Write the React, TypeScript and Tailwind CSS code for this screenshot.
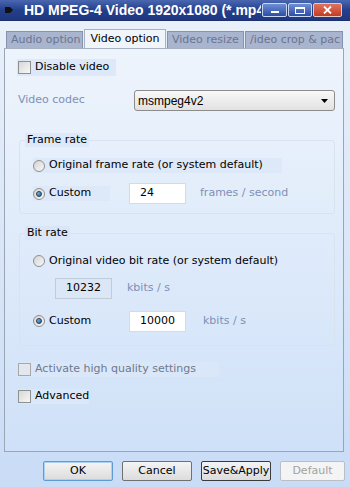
import React from 'react';

const UI = { fontFamily: '"DejaVu Sans", Verdana, sans-serif' };
const BTN = { fontFamily: '"DejaVu Sans", Tahoma, sans-serif' };

const Checkbox: React.FC<{ disabled?: boolean }> = ({ disabled }) => (
  <span
    className={`inline-block shrink-0 w-[13px] h-[13px] border ${
      disabled ? 'border-[#a8a8a8] bg-[#e4e8ee]' : 'border-[#8e8f8f] bg-gradient-to-br from-[#d8d8d8] to-[#f7f7f7]'
    }`}
  />
);

const Radio: React.FC<{ checked?: boolean }> = ({ checked }) => (
  <span className="inline-flex shrink-0 items-center justify-center w-[12px] h-[12px] rounded-full border border-[#8f8f8f] bg-gradient-to-br from-[#d4d4d4] to-[#f8f8f8]">
    {checked && <span className="w-[6px] h-[6px] rounded-full bg-gradient-to-br from-[#7fc4f0] to-[#1a5fa0] border border-[#2c3a4a]" />}
  </span>
);

const Field: React.FC<{ value: string; disabled?: boolean; className?: string }> = ({ value, disabled, className }) => (
  <div
    className={`shrink-0 h-[21px] w-[57px] flex items-center pl-[10px] text-[11px] ${
      disabled ? 'bg-[#dbe7f7] border border-[#c1ccd9] text-black' : 'bg-white border border-[#d3dbe5] text-black'
    } ${className ?? ''}`}
  >
    {value}
  </div>
);

const Tab: React.FC<{ label: string; active?: boolean; w: string }> = ({ label, active, w }) =>
  active ? (
    <div className={`${w} h-[19px] bg-[#f0f5fb] border border-b-0 border-[#a7b1c0] flex items-center justify-center text-[11px] text-black whitespace-nowrap`}>
      {label}
    </div>
  ) : (
    <div className={`${w} h-[17px] bg-[#a9b4ce] border border-[#8793ad] border-b-0 flex items-center pl-[4px] text-[11px] text-[#6a7591] overflow-hidden whitespace-nowrap`}>
      {label}
    </div>
  );

const WinButton: React.FC<{ label: string; variant?: 'focus' | 'default' | 'disabled' | 'normal'; w: string }> = ({ label, variant = 'normal', w }) => {
  const base = `${w} h-[20px] flex items-center justify-center text-[11px] rounded-[2px] whitespace-nowrap`;
  if (variant === 'focus')
    return <div className={`${base} border border-[#5d9bd6] shadow-[inset_0_0_0_1px_#a9d2f5] bg-gradient-to-b from-[#f4f4f4] to-[#dcdcdc] text-black`}>{label}</div>;
  if (variant === 'default')
    return <div className={`${base} border border-[#3b3b3b] bg-gradient-to-b from-[#f4f4f4] to-[#dcdcdc] text-black`}>{label}</div>;
  if (variant === 'disabled')
    return <div className={`${base} border border-[#b9bfc6] bg-[#f4f4f4] text-[#a2a2a2]`}>{label}</div>;
  return <div className={`${base} border border-[#707070] bg-gradient-to-b from-[#f4f4f4] to-[#dcdcdc] text-black`}>{label}</div>;
};

export default function App() {
  return (
    <div className="w-[350px] h-[487px] overflow-hidden flex flex-col bg-gradient-to-b from-[#eaf1fa] to-[#c9dcf6]" style={UI}>
      {/* title bar */}
      <div className="h-[21px] shrink-0 flex items-center bg-gradient-to-b from-[#4a67b0] via-[#253f8c] to-[#1f3781] border-b border-[#1b2f6c]">
        <svg width="8" height="8" viewBox="0 0 8 8" className="ml-[5px] mr-[11px] shrink-0">
          <path d="M0 1 L5 1 L8 4 L5 7 L0 7 Z" fill="#111" />
        </svg>
        <div className="w-[237px] shrink-0 overflow-hidden whitespace-nowrap text-white font-bold text-[14px]" style={{ fontFamily: '"Liberation Sans", Arial, sans-serif' }}>
          HD MPEG-4 Video 1920x1080 (*.mp4
        </div>
        <div className="flex gap-[1px] ml-[1px]">
          <div className="w-[25px] h-[14px] rounded-[2px] border border-[#c9d6f0] bg-gradient-to-b from-[#6f8ed6] to-[#2c4ea3] flex items-end justify-center pb-[3px]">
            <span className="w-[8px] h-[2px] bg-white" />
          </div>
          <div className="w-[24px] h-[14px] rounded-[2px] border border-[#c9d6f0] bg-gradient-to-b from-[#6f8ed6] to-[#2c4ea3] flex items-center justify-center">
            <span className="w-[10px] h-[7px] border border-white border-t-2" />
          </div>
          <div className="w-[29px] h-[14px] rounded-[2px] border border-[#e5c9c4] bg-gradient-to-b from-[#e0735d] to-[#c23a22] flex items-center justify-center">
            <svg width="9" height="8" viewBox="0 0 9 8">
              <path d="M1 0.5 L8 7.5 M8 0.5 L1 7.5" stroke="white" strokeWidth="1.8" />
            </svg>
          </div>
        </div>
      </div>

      {/* tabs */}
      <div className="h-[27px] shrink-0 flex items-end pl-[6px] gap-[1px]">
        <Tab label="Audio option" w="w-[77px]" />
        <Tab label="Video option" w="w-[82px]" active />
        <Tab label="Video resize" w="w-[77px]" />
        <Tab label="/ideo crop & pac" w="w-[98px]" />
      </div>

      {/* panel */}
      <div className="mx-[4px] w-[340px] h-[404px] shrink-0 border border-[#9aa5b5] border-t-[#a7b1c0] bg-gradient-to-b from-[#eef4fc] to-[#cfe1f8] text-[11px] text-black whitespace-nowrap">
        <div className="mt-[10px] ml-[12px] w-[99px] h-[17px] bg-[#dde9f8] flex items-center gap-[4px] pl-[1px]">
          <Checkbox />
          <span>Disable video</span>
        </div>

        <div className="mt-[14px] ml-[13px] flex items-center">
          <span className="w-[116px] text-[#7d90b7]">Video codec</span>
          <div className="w-[201px] h-[21px] rounded-[3px] border border-[#8c8c8c] bg-gradient-to-b from-[#f8f8f8] to-[#e2e2e2] flex items-center pl-[3px] pr-[6px]" style={{ fontFamily: '"Liberation Sans", Arial, sans-serif' }}>
            <span className="flex-1 text-[12px]">msmpeg4v2</span>
            <svg width="7" height="4" viewBox="0 0 7 4">
              <path d="M0 0 L7 0 L3.5 4 Z" fill="#000" />
            </svg>
          </div>
        </div>

        <fieldset className="mt-[22px] ml-[14px] w-[316px] h-[81px] border border-[#d9e3f0] rounded-[3px] px-0 pt-0">
          <legend className="ml-[5px] px-[2px] bg-[#dde9f8] leading-[14px]">Frame rate</legend>
          <div className="mt-[11px] ml-[13px] flex items-center">
            <div className="w-[249px] h-[15px] bg-[#dde9f8] flex items-center gap-[4px]">
              <Radio />
              <span>Original frame rate (or system default)</span>
            </div>
          </div>
          <div className="mt-[10px] ml-[13px] flex items-center">
            <div className="w-[77px] h-[15px] bg-[#dde9f8] flex items-center gap-[4px]">
              <Radio checked />
              <span>Custom</span>
            </div>
            <Field value="24" className="ml-[19px]" />
            <span className="ml-[14px] text-[#7d90b7]">frames / second</span>
          </div>
        </fieldset>

        <fieldset className="mt-[12px] ml-[14px] w-[316px] h-[120px] border border-[#d9e3f0] rounded-[3px] px-0 pt-0">
          <legend className="ml-[5px] px-[2px] bg-[#d8e6f8] leading-[14px]">Bit rate</legend>
          <div className="mt-[13px] ml-[13px] flex items-center gap-[4px]">
            <Radio />
            <span>Original video bit rate (or system default)</span>
          </div>
          <div className="mt-[8px] ml-[35px] flex items-center">
            <Field value="10232" disabled />
            <span className="ml-[15px] text-[#7d90b7]">kbits / s</span>
          </div>
          <div className="mt-[12px] ml-[13px] flex items-center">
            <div className="w-[77px] h-[15px] flex items-center gap-[4px]">
              <Radio checked />
              <span>Custom</span>
            </div>
            <Field value="10000" className="ml-[19px]" />
            <span className="ml-[17px] text-[#7d90b7]">kbits / s</span>
          </div>
        </fieldset>

        <div className="mt-[16px] ml-[13px] w-[201px] h-[15px] bg-[#d9e7f9] flex items-center gap-[4px]">
          <Checkbox disabled />
          <span className="text-[#6d7990]">Activate high quality settings</span>
        </div>

        <div className="mt-[12px] ml-[13px] w-[71px] h-[15px] bg-[#dbe8f9] flex items-center gap-[4px]">
          <Checkbox />
          <span>Advanced</span>
        </div>
      </div>

      {/* buttons */}
      <div className="mt-[9px] flex pl-[43px] gap-[9px]" style={BTN}>
        <WinButton label="OK" variant="focus" w="w-[70px]" />
        <WinButton label="Cancel" w="w-[70px]" />
        <WinButton label="Save&Apply" variant="default" w="w-[70px]" />
        <WinButton label="Default" variant="disabled" w="w-[65px]" />
      </div>
    </div>
  );
}
